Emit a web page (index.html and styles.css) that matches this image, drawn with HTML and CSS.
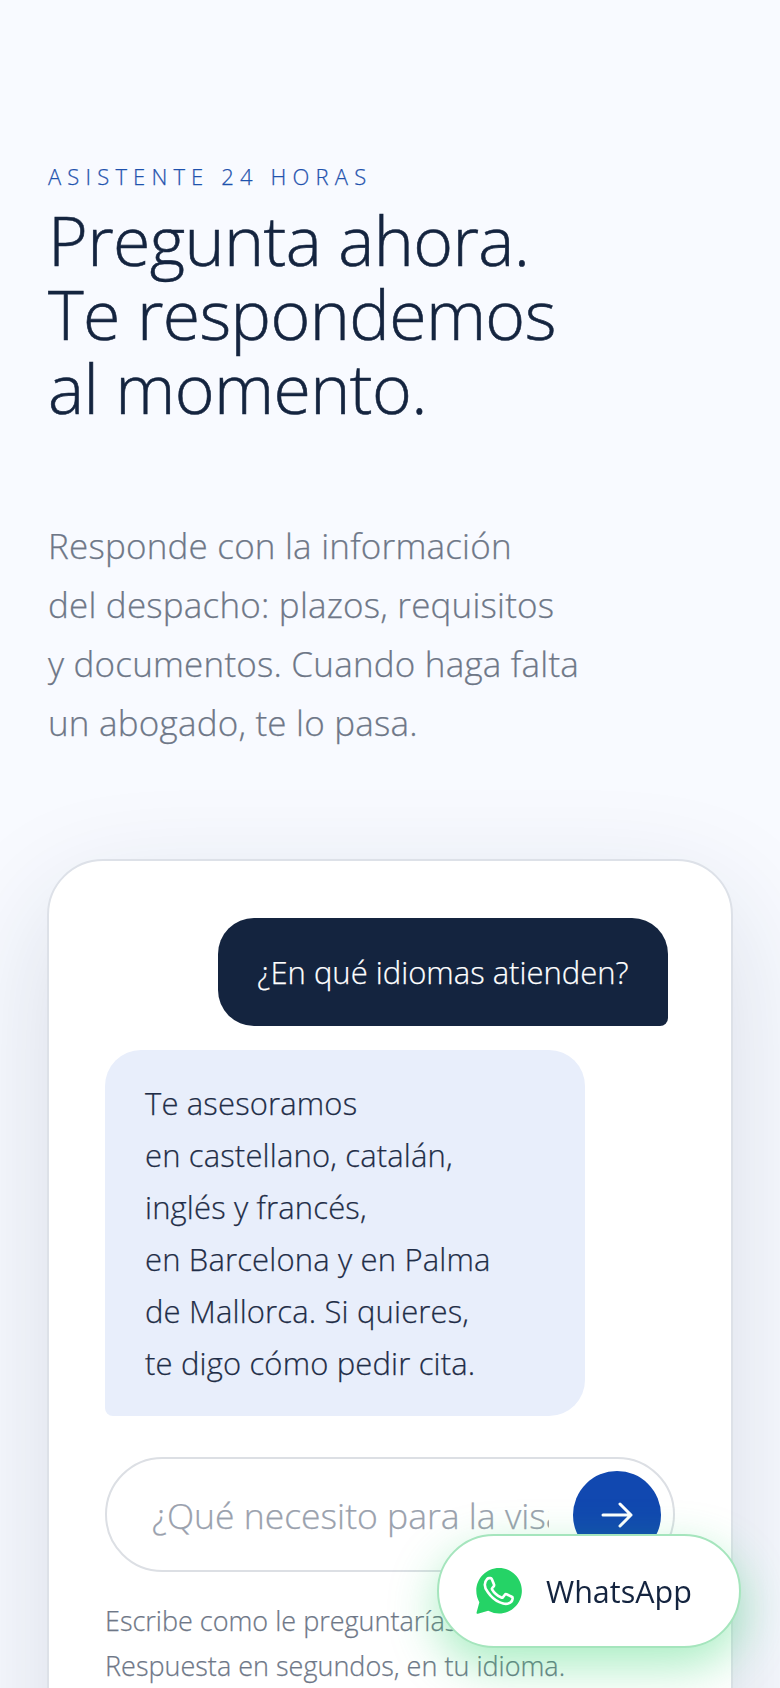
FILE: index.html
```html
<!DOCTYPE html>
<html lang="es">
<head>
<meta charset="utf-8">
<title>Asistente 24 horas</title>
<link rel="stylesheet" href="styles.css">
</head>
<body>
<main class="section">
  <p class="eyebrow">ASISTENTE 24 HORAS</p>
  <h1 class="title">Pregunta ahora.<br>Te respondemos<br>al momento.</h1>
  <p class="lead">Responde con la información<br>del despacho: plazos, requisitos<br>y documentos. Cuando haga falta<br>un abogado, te lo pasa.</p>
  <section class="card">
    <div class="bubble bubble-user">¿En qué idiomas atienden?</div>
    <div class="bubble bubble-bot">Te asesoramos<br>en castellano, catalán,<br>inglés y francés,<br>en Barcelona y en Palma<br>de Mallorca. Si quieres,<br>te digo cómo pedir cita.</div>
    <form class="ask">
      <input class="ask-input" type="text" placeholder="¿Qué necesito para la visa?">
      <button class="ask-send" type="button" aria-label="Enviar">
        <svg class="ask-arrow" viewBox="0 0 32 26" fill="none" stroke="#fff" stroke-width="3" stroke-linecap="round" stroke-linejoin="round"><path d="M2 13h28M19 2l11 11-11 11"/></svg>
      </button>
    </form>
    <p class="note">Escribe como le preguntarías a un abogado.<br>Respuesta en segundos, en tu idioma.</p>
  </section>
</main>
<a class="wa" href="#">
  <svg class="wa-icon" viewBox="0 0 24 24"><path fill="#25d366" d="M12.05 0C5.5 0 .16 5.33.16 11.89c0 2.1.55 4.14 1.59 5.95L.3 23.2c-.1.5.2.8.7.7l5.36-1.55a11.88 11.88 0 0 0 5.69 1.44c6.55 0 11.89-5.33 11.89-11.89S18.6 0 12.05 0Z"/><path transform="translate(12 12) scale(1.2) translate(-12 -12)" fill="none" stroke="#fff" stroke-width="1.15" stroke-linejoin="round" d="M17.3 14.4c-.3-.15-1.76-.87-2.03-.97-.27-.1-.47-.15-.67.15-.2.3-.77.97-.94 1.16-.17.2-.35.22-.64.08-.3-.15-1.26-.46-2.4-1.48-.88-.79-1.48-1.76-1.65-2.06-.17-.3-.02-.46.13-.6.13-.14.3-.35.45-.53.15-.17.2-.3.3-.5.1-.2.05-.37-.03-.52-.07-.15-.67-1.6-.91-2.2-.24-.58-.49-.5-.67-.51h-.57c-.2 0-.52.07-.8.37-.27.3-1.04 1.02-1.04 2.48s1.07 2.88 1.22 3.07c.15.2 2.1 3.2 5.08 4.49.7.3 1.26.49 1.7.62.7.23 1.35.2 1.87.12.57-.08 1.75-.72 2-1.41.25-.7.25-1.29.18-1.42-.08-.12-.28-.19-.57-.34Z"/></svg>
  <span class="wa-label">WhatsApp</span>
</a>
</body>
</html>
```
FILE: styles.css
```css
* { box-sizing: border-box; }
html, body { margin: 0; height: 100%; overflow: hidden; }
body {
  background: #f8faff;
  color: #14243f;
  font-family: "Open Sans", "Liberation Sans", sans-serif;
  font-weight: 300;
  -webkit-text-stroke: 0.25px currentColor;
}
.section { padding: 164px 47px 0 47px; }
.eyebrow {
  margin: 0 0 0 1px;
  font-size: 22px;
  line-height: 24px;
  letter-spacing: 0.28em;
  color: #1f52ad;
}
.title {
  margin: 15px 0 0 1px;
  font-size: 68px;
  line-height: 74px;
  font-weight: 300;
  letter-spacing: -0.6px;
  color: #14243f;
  -webkit-text-stroke: 0.6px currentColor;
}
.lead {
  margin: 91px 0 0 1px;
  font-size: 35px;
  line-height: 59px;
  letter-spacing: 0.2px;
  color: #6e7787;
}
.card {
  margin-top: 107px;
  height: 1000px;
  padding: 57px 56px 0;
  background: #fff;
  border: 2px solid #dde1e8;
  border-radius: 56px;
  box-shadow: 0 40px 120px rgba(20, 40, 80, 0.14);
  display: flex;
  flex-direction: column;
}
.bubble { font-size: 31px; }
.bubble-user {
  align-self: flex-end;
  margin-right: 7px;
  width: 450px;
  height: 108px;
  padding: 0 38px;
  display: flex;
  align-items: center;
  justify-content: center;
  white-space: nowrap;
  color: #fff;
  background: #14243f;
  border-radius: 36px 36px 8px 36px;
}
.bubble-bot {
  align-self: flex-start;
  margin-top: 24px;
  width: 480px;
  padding: 27px 40px;
  line-height: 52px;
  letter-spacing: 0.15px;
  color: #1f2d47;
  background: #e8eefb;
  border-radius: 36px 36px 36px 8px;
}
.ask {
  margin-top: 41px;
  height: 115px;
  padding: 0 12px 0 45px;
  display: flex;
  align-items: center;
  gap: 24px;
  border: 2px solid #dcdfe4;
  border-radius: 58px;
}
.ask-input {
  flex: 1;
  min-width: 0;
  border: 0;
  outline: 0;
  padding: 0;
  background: transparent;
  font: inherit;
  font-size: 35.5px;
  color: #14243f;
}
.ask-input::placeholder { color: #9aa1ad; opacity: 1; }
.ask-send {
  flex: none;
  width: 88px;
  height: 88px;
  padding: 0;
  border: 0;
  border-radius: 50%;
  background: #1148b0;
  display: flex;
  align-items: center;
  justify-content: center;
}
.ask-arrow { width: 32px; height: 26px; }
.note {
  margin: 26px 0 0;
  font-size: 27px;
  line-height: 45px;
  color: #6e7787;
}
.wa {
  position: fixed;
  right: 39px;
  bottom: 40px;
  width: 304px;
  height: 114px;
  padding-left: 37px;
  display: flex;
  align-items: center;
  gap: 24px;
  background: #fff;
  border: 2px solid #a5e5bd;
  border-radius: 57px;
  box-shadow: 0 18px 48px rgba(37, 211, 102, 0.4);
  text-decoration: none;
}
.wa-icon { width: 46px; height: 46px; flex: none; }
.wa-label { font-size: 30.5px; font-weight: 400; color: #14243f; -webkit-text-stroke: 0; }
```
